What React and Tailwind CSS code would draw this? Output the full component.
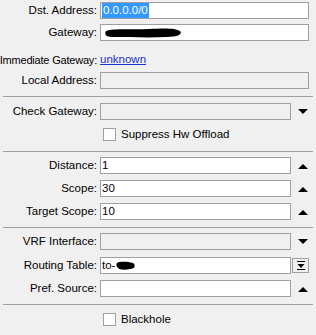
import React from 'react'

const FONT = { fontFamily: '"Liberation Sans", Arial, sans-serif' }

function ArrowDown() {
  return (
    <svg width="10" height="6" viewBox="0 0 10 6">
      <path d="M0 0 H10 L5 5 Z" fill="#000" />
    </svg>
  )
}

function ArrowUp() {
  return (
    <svg width="10" height="6" viewBox="0 0 10 6">
      <path d="M0 6 H10 L5 1 Z" fill="#000" />
    </svg>
  )
}

function Label({ children, className = 'pr-[3px]' }) {
  return (
    <div className={`w-[100px] shrink-0 flex justify-end whitespace-nowrap leading-none ${className}`}>
      {children}
    </div>
  )
}

function Row({ label, children, side, className = '' }) {
  return (
    <div className={`flex items-center h-[17px] ${className}`}>
      <Label>{label}</Label>
      {children}
      {side !== undefined && (
        <div className="w-[23px] flex items-center justify-center">{side}</div>
      )}
    </div>
  )
}

function Field({ wide, disabled, children }) {
  return (
    <div
      className={`h-[17px] border border-[#a0a0a0] flex items-center px-[1px] leading-none ${
        wide ? 'w-[209px]' : 'w-[191px]'
      } ${disabled ? 'bg-[#f0f0f0]' : 'bg-white'}`}
    >
      {children}
    </div>
  )
}

function Sep({ className = '' }) {
  return <div className={`mx-[3px] h-px bg-[#a0a0a0] ${className}`} />
}

function Check({ label, className = '' }) {
  return (
    <div className={`flex items-center pl-[103px] ${className}`}>
      <div className="w-[13px] h-[13px] border border-[#a0a0a0] bg-white" />
      <span className="ml-[5px] leading-none">{label}</span>
    </div>
  )
}

export default function App() {
  return (
    <div
      className="w-[316px] h-[335px] bg-[#f0f0f0] text-black text-[11.5px] overflow-hidden pt-[2px]"
      style={FONT}
    >
      <Row label="Dst. Address:">
        <Field wide>
          <span className="bg-[#3399ff] text-white px-[1px] py-[2px]">0.0.0.0/0</span>
        </Field>
      </Row>

      <Row label="Gateway:" className="mt-[5px]">
        <Field wide>
          <svg width="80" height="12" viewBox="0 0 80 12" className="ml-[2px]">
            <path
              d="M2 4 C10 1 30 3 45 2 C60 1 72 1 76 4 C79 7 74 10 62 10 C45 11 25 10 8 10 C2 10 0 7 2 4 Z"
              fill="#000"
            />
          </svg>
        </Field>
      </Row>

      <div className="flex items-center h-[16px] mt-[11px]">
        <Label className="pr-[3px] text-[11px] tracking-[-0.2px]">Immediate Gateway:</Label>
        <span className="text-[#1a33cc] underline leading-none">unknown</span>
      </div>

      <Row label="Local Address:" className="mt-[4px]">
        <Field wide disabled />
      </Row>

      <Sep className="mt-[7px]" />

      <Row label="Check Gateway:" className="mt-[6px]" side={<ArrowDown />}>
        <Field disabled />
      </Row>

      <Check label="Suppress Hw Offload" className="mt-[8px]" />

      <Sep className="mt-[10px]" />

      <Row label="Distance:" className="mt-[5px]" side={<ArrowUp />}>
        <Field>1</Field>
      </Row>
      <Row label="Scope:" className="mt-[6px]" side={<ArrowUp />}>
        <Field>30</Field>
      </Row>
      <Row label="Target Scope:" className="mt-[6px]" side={<ArrowUp />}>
        <Field>10</Field>
      </Row>

      <Sep className="mt-[7px]" />

      <Row label="VRF Interface:" className="mt-[5px]" side={<ArrowDown />}>
        <Field disabled />
      </Row>
      <div className="flex items-center h-[17px] mt-[7px]">
        <Label>Routing Table:</Label>
        <Field>
          <span>to-</span>
          <svg width="20" height="10" viewBox="0 0 20 10" className="ml-[1px]">
            <path d="M1 2 C5 0 12 1 17 2 C20 4 19 8 14 8 C9 9 4 9 2 7 C0 5 0 3 1 2 Z" fill="#000" />
          </svg>
        </Field>
        <div className="w-[17px] h-[15px] ml-[1px] border border-[#a0a0a0] flex items-center justify-center">
          <svg width="8" height="9" viewBox="0 0 8 9">
            <path d="M0 0.5 H8" stroke="#000" strokeWidth="1" />
            <path d="M0.5 3 H7.5 L4 7 Z" fill="#000" />
            <path d="M0 8.5 H8" stroke="#000" strokeWidth="1" />
          </svg>
        </div>
      </div>
      <Row label="Pref. Source:" className="mt-[6px]" side={<ArrowUp />}>
        <Field />
      </Row>

      <Sep className="mt-[7px]" />

      <Check label="Blackhole" className="mt-[8px]" />
    </div>
  )
}
